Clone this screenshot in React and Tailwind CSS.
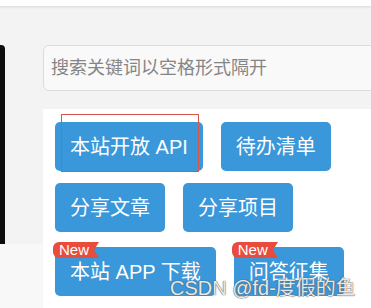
import React from 'react';

const FONT = { fontFamily: '"Liberation Sans", "Noto Sans CJK SC", sans-serif' };

function NewBadge() {
  return (
    <span className="absolute -left-[2px] -top-[5px] flex items-center">
      <span className="bg-[#e74c3c] text-white text-[15px] leading-[16px] pl-[6px] pr-[2px] rounded-l-[6px] h-[16px]">New</span>
      <svg width="8" height="16" viewBox="0 0 8 16" className="block">
        <path d="M0 0 H8 L3 8 L8 16 H0 Z" fill="#e74c3c" />
      </svg>
    </span>
  );
}

function Btn({ label, badge, outline }) {
  return (
    <div className="relative">
      <button
        type="button"
        className="h-[49px] px-[15px] rounded-[5px] bg-[#3a97d9] text-white text-[20px] leading-none whitespace-nowrap"
      >
        {label}
      </button>
      {badge && <NewBadge />}
      {outline && (
        <div className="absolute left-[6px] -top-[8px] w-[138px] h-[58px] border border-[#d9534f] pointer-events-none"></div>
      )}
    </div>
  );
}

export default function App() {
  return (
    <div className="w-[371px] h-[308px] overflow-hidden bg-[#f3f3f3] relative" style={FONT}>
      {/* top strip */}
      <div className="h-[7px] bg-white border-b border-[#e2e2e2] shadow-[0_1px_2px_rgba(0,0,0,0.06)]"></div>

      <div className="flex pt-[38px]">
        {/* left dark panel */}
        <div className="w-[43px] shrink-0 flex flex-col">
          <div className="w-[5px] h-[199px] bg-[#0d0d0d] rounded-tr-[4px]"></div>
          <div className="flex-1 bg-[#f8f8f8]"></div>
        </div>

        {/* main */}
        <div className="flex-1 flex flex-col">
          <div className="h-[46px] w-[340px] rounded-[6px] border border-[#dcdcdc] bg-[#f9f9f9] flex items-center px-[7px]">
            <span className="text-[18px] text-[#858585] whitespace-nowrap">搜索关键词以空格形式隔开</span>
          </div>

          <div className="mt-[18px] bg-white w-[340px] h-[220px] pl-[12px] pt-[13px] flex flex-col">
            <div className="flex gap-[18px]">
              <Btn label="本站开放 API" outline />
              <Btn label="待办清单" />
            </div>
            <div className="flex gap-[18px] mt-[12px]">
              <Btn label="分享文章" />
              <Btn label="分享项目" />
            </div>
            <div className="flex gap-[18px] mt-[15px]">
              <Btn label="本站 APP 下载" badge />
              <Btn label="问答征集" badge />
            </div>
          </div>
        </div>
      </div>

      {/* watermark */}
      <div
        className="absolute left-[170px] top-[276px] text-[20px] leading-[24px] text-[#e8e8e8] whitespace-nowrap"
        style={{ textShadow: '0 0 1px #555, 0 0 1px #555' }}
      >
        CSDN @fd-度假的鱼
      </div>
    </div>
  );
}
